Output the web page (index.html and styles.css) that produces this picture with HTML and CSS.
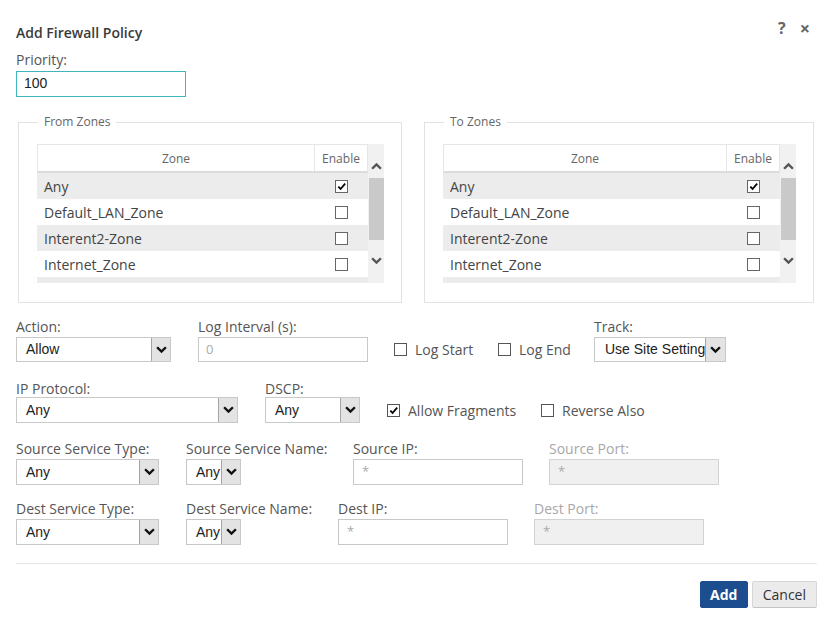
FILE: index.html
```html
<!DOCTYPE html>
<html>
<head>
<meta charset="utf-8">
<link rel="stylesheet" href="styles.css">
</head>
<body>
<div class="dialog">
  <div class="head">
    <div class="title">Add Firewall Policy</div>
    <div class="tools"><span class="help">?</span><span class="close">×</span></div>
  </div>
  <div class="lbl">Priority:</div>
  <div class="input focus priority">100</div>

  <div class="zones">
    <fieldset class="zone-set">
      <legend>From Zones</legend>
      <div class="grid">
        <div class="grid-main">
          <div class="ghead"><div class="c-zone">Zone</div><div class="c-en">Enable</div></div>
          <div class="grow alt"><div class="c-zone">Any</div><div class="c-en"><span class="cb on"><svg viewBox="0 0 12 12"><path d="M2.5 6.2 L5 8.7 L10 2.8" /></svg></span></div></div>
          <div class="grow"><div class="c-zone">Default_LAN_Zone</div><div class="c-en"><span class="cb"></span></div></div>
          <div class="grow alt"><div class="c-zone">Interent2-Zone</div><div class="c-en"><span class="cb"></span></div></div>
          <div class="grow"><div class="c-zone">Internet_Zone</div><div class="c-en"><span class="cb"></span></div></div>
          <div class="gstrip"></div>
        </div>
        <div class="sbar">
          <svg class="sarrow" viewBox="0 0 10 7"><path d="M1 6 L5 2 L9 6"/></svg>
          <div class="thumb"></div>
          <svg class="sarrow" viewBox="0 0 10 7"><path d="M1 1 L5 5 L9 1"/></svg>
        </div>
      </div>
    </fieldset>
    <fieldset class="zone-set">
      <legend>To Zones</legend>
      <div class="grid">
        <div class="grid-main">
          <div class="ghead"><div class="c-zone">Zone</div><div class="c-en">Enable</div></div>
          <div class="grow alt"><div class="c-zone">Any</div><div class="c-en"><span class="cb on"><svg viewBox="0 0 12 12"><path d="M2.5 6.2 L5 8.7 L10 2.8" /></svg></span></div></div>
          <div class="grow"><div class="c-zone">Default_LAN_Zone</div><div class="c-en"><span class="cb"></span></div></div>
          <div class="grow alt"><div class="c-zone">Interent2-Zone</div><div class="c-en"><span class="cb"></span></div></div>
          <div class="grow"><div class="c-zone">Internet_Zone</div><div class="c-en"><span class="cb"></span></div></div>
          <div class="gstrip"></div>
        </div>
        <div class="sbar">
          <svg class="sarrow" viewBox="0 0 10 7"><path d="M1 6 L5 2 L9 6"/></svg>
          <div class="thumb"></div>
          <svg class="sarrow" viewBox="0 0 10 7"><path d="M1 1 L5 5 L9 1"/></svg>
        </div>
      </div>
    </fieldset>
  </div>

  <div class="row row1">
    <div class="field w-action">
      <div class="lbl">Action:</div>
      <div class="select s-action"><span class="sv">Allow</span><span class="sa"><svg viewBox="0 0 10 7"><path d="M1 1 L5 5 L9 1"/></svg></span></div>
    </div>
    <div class="field w-log">
      <div class="lbl">Log Interval (s):</div>
      <div class="input s-log"><span class="ph">0</span></div>
    </div>
    <label class="check w-ls"><span class="cb"></span>Log Start</label>
    <label class="check w-le"><span class="cb"></span>Log End</label>
    <div class="field">
      <div class="lbl">Track:</div>
      <div class="select s-track"><span class="sv">Use Site Setting</span><span class="sa"><svg viewBox="0 0 10 7"><path d="M1 1 L5 5 L9 1"/></svg></span></div>
    </div>
  </div>

  <div class="row row2">
    <div class="field w-ip">
      <div class="lbl">IP Protocol:</div>
      <div class="select s-ip"><span class="sv">Any</span><span class="sa"><svg viewBox="0 0 10 7"><path d="M1 1 L5 5 L9 1"/></svg></span></div>
    </div>
    <div class="field w-dscp">
      <div class="lbl">DSCP:</div>
      <div class="select s-dscp"><span class="sv">Any</span><span class="sa"><svg viewBox="0 0 10 7"><path d="M1 1 L5 5 L9 1"/></svg></span></div>
    </div>
    <label class="check w-af"><span class="cb on"><svg viewBox="0 0 12 12"><path d="M2.5 6.2 L5 8.7 L10 2.8" /></svg></span>Allow Fragments</label>
    <label class="check"><span class="cb"></span>Reverse Also</label>
  </div>

  <div class="row row3">
    <div class="field w-st">
      <div class="lbl">Source Service Type:</div>
      <div class="select s-st"><span class="sv">Any</span><span class="sa"><svg viewBox="0 0 10 7"><path d="M1 1 L5 5 L9 1"/></svg></span></div>
    </div>
    <div class="field w-sn">
      <div class="lbl">Source Service Name:</div>
      <div class="select s-sn"><span class="sv">Any</span><span class="sa"><svg viewBox="0 0 10 7"><path d="M1 1 L5 5 L9 1"/></svg></span></div>
    </div>
    <div class="field w-sip">
      <div class="lbl">Source IP:</div>
      <div class="input s-ipin"><span class="ph">*</span></div>
    </div>
    <div class="field">
      <div class="lbl dis">Source Port:</div>
      <div class="input s-ipin disabled"><span class="ph">*</span></div>
    </div>
  </div>

  <div class="row row4">
    <div class="field w-st">
      <div class="lbl">Dest Service Type:</div>
      <div class="select s-st"><span class="sv">Any</span><span class="sa"><svg viewBox="0 0 10 7"><path d="M1 1 L5 5 L9 1"/></svg></span></div>
    </div>
    <div class="field w-dn">
      <div class="lbl">Dest Service Name:</div>
      <div class="select s-sn"><span class="sv">Any</span><span class="sa"><svg viewBox="0 0 10 7"><path d="M1 1 L5 5 L9 1"/></svg></span></div>
    </div>
    <div class="field w-sip">
      <div class="lbl">Dest IP:</div>
      <div class="input s-ipin"><span class="ph">*</span></div>
    </div>
    <div class="field">
      <div class="lbl dis">Dest Port:</div>
      <div class="input s-ipin disabled"><span class="ph">*</span></div>
    </div>
  </div>

  <div class="rule"></div>
  <div class="buttons">
    <button class="btn primary">Add</button>
    <button class="btn">Cancel</button>
  </div>
</div>
</body>
</html>
```

FILE: styles.css
```css
* { box-sizing: border-box; }
body {
  margin: 0;
  background: #fff;
  font-family: "Open Sans", "Liberation Sans", sans-serif;
  font-size: 14px;
  color: #555;
}
.dialog {
  padding: 23px 18px 0 16px;
}
.head {
  display: flex;
  justify-content: space-between;
  align-items: flex-start;
  height: 19px;
}
.title {
  font-size: 14px;
  font-weight: 600;
  line-height: 19px;
  color: #3a3a3a;
}
.tools {
  display: flex;
  gap: 14px;
  margin-top: -4px;
  margin-right: 7px;
  font-weight: 700;
  font-size: 16px;
  color: #666;
  line-height: 19px;
}
.close { font-size: 18px; }
.lbl {
  line-height: 19px;
  white-space: nowrap;
  color: #555;
}
.lbl.dis { color: #a8a8a8; }
.head + .lbl { margin-top: 8px; }

.input {
  height: 25px;
  border: 1px solid #c8c8c8;
  background: #fff;
  font-family: "Liberation Sans", Arial, sans-serif;
  font-size: 14px;
  color: #222;
  line-height: 23px;
  padding-left: 7px;
}
.input.disabled { background: #f0f0f0; border-color: #d2d2d2; }
.ph { color: #aaa; font-family: "Open Sans", sans-serif; font-size: 13px; }
.input.focus { border-color: #3fb5bd; }
.priority { width: 170px; height: 26px; margin-top: 2px; padding-left: 7px; }

.zones {
  display: grid;
  grid-template-columns: 384px 390px;
  gap: 22px;
  margin: 17px 0 0 2px;
}
.zone-set {
  margin: 0;
  border: 1px solid #e2e2e2;
  padding: 14px 17px 19px 18px;
  min-width: 0;
}
.zone-set legend {
  padding: 0 6px;
  margin-left: 1px;
  font-size: 12px;
  line-height: 16px;
  color: #666;
}
.grid {
  display: flex;
  height: 139px;
  background: #eeeeee;
}
.grid-main { flex: 1; display: flex; flex-direction: column; }
.ghead {
  display: flex;
  height: 29px;
  background: #fff;
  border: 1px solid #e6e6e6;
  border-bottom: 2px solid #dcdcdc;
  font-size: 12px;
  color: #666;
}
.ghead .c-zone, .ghead .c-en {
  display: flex; align-items: center; justify-content: center;
}
.ghead .c-en { border-left: 1px solid #e6e6e6; }
.c-zone { flex: 1; }
.c-en { width: 53px; display: flex; align-items: center; justify-content: center; }
.grow {
  display: flex;
  height: 26px;
  background: #fff;
  align-items: center;
  color: #444;
}
.grow.alt { background: #ececec; }
.grow .c-zone { padding-left: 7px; }
.gstrip { flex: 1; background: #ececec; }
.sbar {
  width: 16px;
  background: #f1f1f1;
  display: flex;
  flex-direction: column;
  align-items: center;
  padding-top: 18px;
}
.sarrow { width: 11px; height: 8px; fill: none; stroke: #555; stroke-width: 2.2; }
.thumb { width: 15px; height: 62px; background: #c9c9c9; margin: 8px 0 17px; }

.cb {
  display: inline-flex;
  width: 13px;
  height: 13px;
  border: 1px solid #666;
  background: #fff;
  flex: none;
}
.cb svg { width: 11px; height: 11px; fill: none; stroke: #000; stroke-width: 2; }

.row { display: flex; align-items: flex-end; }
.row1 { margin-top: 14px; }
.row1 .lbl { margin-bottom: 1px; }
.row2 { margin-top: 17px; }
.row2 .lbl { margin-bottom: -1px; }
.row3 { margin-top: 16px; }
.row3 .lbl { margin-bottom: 1px; }
.row4 { margin-top: 14px; }
.row4 .lbl { margin-bottom: 1px; }

.field { display: flex; flex-direction: column; }
.select {
  display: flex;
  height: 25px;
  border: 1px solid #c8c8c8;
  background: #fff;
  font-family: "Liberation Sans", Arial, sans-serif;
  font-size: 14px;
  color: #222;
  overflow: hidden;
}
.sv { flex: 1; padding-left: 9px; line-height: 23px; white-space: nowrap; overflow: hidden; }
.sa {
  width: 19px;
  flex: none;
  background: #e3e3e3;
  border-left: 1px solid #a5a5a5;
  display: flex; align-items: center; justify-content: center;
}
.sa svg { width: 11px; height: 8px; fill: none; stroke: #111; stroke-width: 2.2; }

.w-action { width: 182px; }
.s-action { width: 155px; }
.w-log { width: 196px; }
.s-log { width: 170px; }
.check {
  display: flex;
  align-items: center;
  gap: 8px;
  height: 25px;
  color: #555;
  white-space: nowrap;
}
.check .cb { width: 13px; height: 13px; border-color: #555; }
.w-ls { width: 104px; }
.w-le { width: 96px; }
.s-track { width: 132px; }
.s-track .sv { padding-left: 10px; }
.s-track .sa { width: 20px; }

.w-ip { width: 249px; }
.s-ip { width: 222px; height: 26px; }
.w-dscp { width: 122px; }
.s-dscp { width: 95px; height: 26px; }
.s-ip .sv, .s-dscp .sv { line-height: 24px; }
.w-af { width: 154px; }

.w-st { width: 170px; }
.s-st { width: 143px; height: 26px; }
.s-st .sv, .s-sn .sv { line-height: 24px; }
.w-sn { width: 167px; }
.w-dn { width: 152px; }
.s-sn { width: 55px; height: 26px; }
.w-sip { width: 196px; }
.s-ipin { width: 170px; height: 26px; padding-left: 8px; }

.rule {
  margin-top: 18px;
  height: 1px;
  background: #e6e6e6;
}
.buttons {
  display: flex;
  justify-content: flex-end;
  gap: 4px;
  margin-top: 17px;
}
.btn {
  height: 27px;
  font-family: "Open Sans", sans-serif;
  font-size: 14px;
  padding: 0 10px;
  border: 1px solid #d6d6d6;
  border-bottom-color: #c4c4c4;
  background: #ebebeb;
  color: #333;
  border-radius: 2px;
}
.btn.primary {
  background: #1c4e8f;
  border-color: #1c4e8f;
  color: #fff;
  font-weight: 700;
  width: 48px;
  padding: 0;
}
```
